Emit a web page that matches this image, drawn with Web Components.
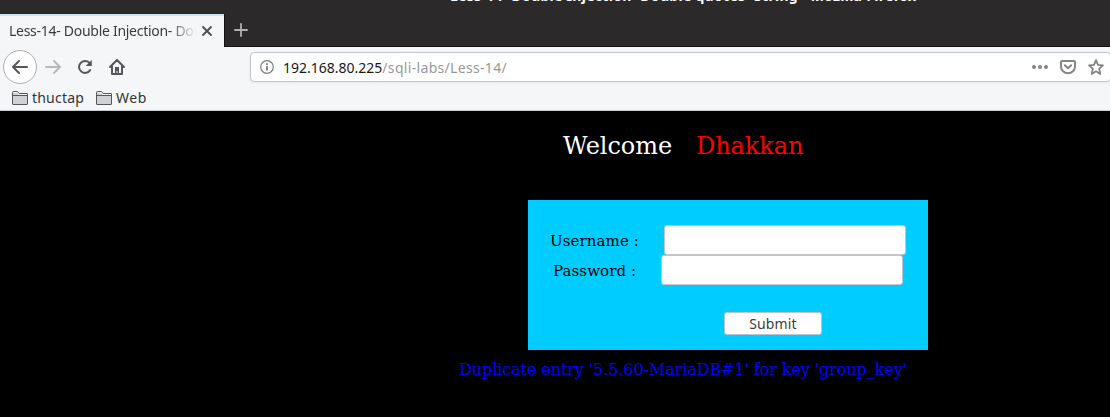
<!DOCTYPE html>
<html lang="en">
<head>
<meta charset="utf-8">
<title>Less-14- Double Injection- Double quotes- String</title>
<style>
html,body{margin:0;width:1110px;height:417px;overflow:hidden;background:#000}
</style>
</head>
<body>
<browser-window>
  <title-bar slot="chrome">Less-14- Double Injection- Double quotes- String - Mozilla Firefox</title-bar>
  <tab-strip slot="chrome">Less-14- Double Injection- Dou</tab-strip>
  <nav-bar slot="chrome"><span slot="host">192.168.80.225</span><span slot="path">/sqli-labs/Less-14/</span></nav-bar>
  <bookmark-bar slot="chrome">
    <bookmark-folder style="--w:52px;--ls:.2px">thuctap</bookmark-folder>
    <bookmark-folder style="--w:31px;--ls:.5px">Web</bookmark-folder>
  </bookmark-bar>
  <lesson-page>
    <login-form>
      <form-field style="--left:22px;--label:114px">Username :</form-field>
      <form-field style="--left:25px;--label:108px">Password :</form-field>
    </login-form>
    <span slot="message">Duplicate entry '5.5.60-MariaDB#1' for key 'group_key'</span>
  </lesson-page>
</browser-window>
<script>
const define = (name, html) => customElements.define(name, class extends HTMLElement {
  constructor() {
    super();
    this.attachShadow({ mode: 'open' }).innerHTML = html;
  }
});

define('browser-window', `
<style>
:host{display:flex;flex-direction:column;width:1110px;height:417px;font-family:"Noto Sans",sans-serif;background:#000}
header{height:110px;flex:none;display:flex;flex-direction:column;background:#f5f6f8;border-bottom:1px solid #c5c9cd}
</style>
<header><slot name="chrome"></slot></header><slot></slot>`);

define('title-bar', `
<style>
:host{display:block;height:14px;background:#2c292a;color:#fff;overflow:hidden}
div{margin:-14px 0 0 450px;height:20px;line-height:20px;font-size:14px;font-weight:700;white-space:nowrap;letter-spacing:.29px}
</style>
<div><slot></slot></div>`);

define('tab-strip', `
<style>
:host{display:flex;height:33px;background:#2c292a}
.tab{width:224px;height:33px;box-sizing:border-box;border-top:2px solid #cbe6fb;background:#f5f6f8;display:flex;align-items:center;padding-left:9px}
.label{width:187px;height:24px;line-height:22px;overflow:hidden;white-space:nowrap;font-size:14px;letter-spacing:-.28px;color:#3b3b3d;
 -webkit-mask-image:linear-gradient(90deg,#000 160px,transparent 187px);mask-image:linear-gradient(90deg,#000 160px,transparent 187px)}
.close{margin:-2px 0 0 5px}
.rest{flex:1;box-sizing:border-box;border-top:1px solid #2c292a;border-bottom:1px solid #141213;border-left:1px solid #141213;display:flex;padding:7px 0 0 8px}
svg{flex:none}
</style>
<div class="tab"><div class="label"><slot></slot></div>
<svg class="close" width="12" height="12" viewBox="0 0 12 12"><path d="M2 2l8 8M10 2l-8 8" stroke="#4b4c50" stroke-width="1.8" stroke-linecap="round"/></svg></div>
<div class="rest"><svg width="16" height="16" viewBox="0 0 16 16"><path d="M8 2v12M2 8h12" stroke="#b0afb0" stroke-width="1.8" stroke-linecap="round"/></svg></div>`);

define('nav-bar', `
<style>
:host{display:flex;height:40px;align-items:center;box-sizing:border-box}
svg{flex:none;display:block}
.back{width:32px;height:32px;flex:none;margin-left:3px;border:1px solid #b1b1b3;border-radius:50%;background:#fdfdfd;display:grid;place-items:center}
.url{display:flex;align-items:center;box-sizing:border-box;width:861px;height:30px;flex:none;margin-left:124px;border:1px solid #c1c5cd;border-radius:4px;background:#fff;box-shadow:0 1px 3px #0000000f;padding-left:9px}
.text{width:747px;flex:none;margin-left:9px;font-size:14px;line-height:20px;padding-top:1px;white-space:nowrap;color:#18181a}
.host{letter-spacing:0}
.path{color:#98989b;letter-spacing:.32px}
</style>
<div class="back"><svg width="18" height="16" viewBox="0 0 18 16"><path d="M16 8H2.500M8 2L2 8l6 6" fill="none" stroke="#555659" stroke-width="2" stroke-linecap="round" stroke-linejoin="round"/></svg></div>
<svg style="margin-left:7px" width="18" height="16" viewBox="0 0 18 16"><path d="M2 8h13.500M10 2l6 6-6 6" fill="none" stroke="#b9babc" stroke-width="2" stroke-linecap="round" stroke-linejoin="round"/></svg>
<svg style="margin-left:14px" width="18" height="16" viewBox="0 0 18 16"><path d="M13.300 3.700A6 6 0 1 0 14.200 11" fill="none" stroke="#555659" stroke-width="2" stroke-linecap="round"/><path d="M15.800 .9v6.200H9.600z" fill="#555659"/></svg>
<svg style="margin-left:14px" width="18" height="18" viewBox="0 0 18 18"><path d="M2 9l7-7 7 7M4 8.500V16h10V8.500" fill="none" stroke="#555659" stroke-width="2" stroke-linecap="round" stroke-linejoin="round"/><path d="M7 9h4v6H9.500v-2H8.500v2H7z" fill="#555659"/></svg>
<div class="url">
<svg width="14" height="14" viewBox="0 0 14 14"><circle cx="7" cy="7" r="6.300" fill="none" stroke="#7d7d80" stroke-width="1.200"/><path d="M6.100 6h1.800v4.500H6.100zM6.100 3.200h1.800V5H6.100z" fill="#7d7d80"/></svg>
<div class="text"><span class="host"><slot name="host"></slot></span><span class="path"><slot name="path"></slot></span></div>
<svg style="margin-left:1px" width="18" height="6" viewBox="0 0 18 6"><g fill="#858587"><circle cx="3" cy="3" r="2"/><circle cx="9" cy="3" r="2"/><circle cx="15" cy="3" r="2"/></g></svg>
<svg style="margin-left:11px" width="16" height="16" viewBox="0 0 16 16"><path d="M2 2h12a1 1 0 0 1 1 1v4.500a7 6.800 0 0 1-14 0V3a1 1 0 0 1 1-1z" fill="none" stroke="#858587" stroke-width="2"/><path d="M4.800 6.300L8 9.300l3.200-3" fill="none" stroke="#858587" stroke-width="2" stroke-linecap="round" stroke-linejoin="round"/></svg>
<svg style="margin-left:12px" width="16" height="16" viewBox="0 0 16 16"><path d="M8 1.200l2 4.700 5 .500-3.800 3.300L12.300 15 8 12.200 3.700 15l1.100-5.300L1 6.400l5-.5z" fill="none" stroke="#858587" stroke-width="1.800" stroke-linejoin="round"/></svg>
</div>`);

define('bookmark-bar', `
<style>:host{display:flex;height:23px;padding-left:12px;gap:12px;align-items:center}</style><slot></slot>`);

define('bookmark-folder', `
<style>
:host{display:flex;align-items:center;gap:4px;height:22px;color:#333437}
svg{flex:none;margin-top:-1px}
span{width:var(--w);font-size:14px;line-height:20px;height:22px;letter-spacing:var(--ls);white-space:nowrap}
</style>
<svg width="16" height="14" viewBox="0 0 16 14"><path d="M.5 13V1.500q0-1 1-1h4l1.500 2h8q.5 0 .5.500v10q0 .5-.5.500H1q-.5 0-.5-.500z" fill="#d0d1d2" stroke="#55565a"/><path d="M1 4.500h14" stroke="#55565a"/><path d="M1.500 1.500h3.700l1.500 2H15" fill="none" stroke="#f5f6f8" stroke-width="1"/></svg>
<span><slot></slot></span>`);

define('lesson-page', `
<style>
:host{display:flex;flex-direction:column;flex:1;background:#000;font-family:"DejaVu Serif",serif}
.welcome{display:flex;height:28px;line-height:28px;margin:21px 0 0 563px;font-size:24px;white-space:pre;color:#fff}
.welcome span{width:133px;letter-spacing:-.05px}
.welcome i{font-style:normal;color:#f00;letter-spacing:-.05px}
.message{margin:10px 0 0 459px;font-size:16px;line-height:20px;white-space:nowrap;color:#00f;letter-spacing:-.08px}
</style>
<div class="welcome"><span>Welcome</span><i>Dhakkan</i></div>
<slot></slot>
<div class="message"><slot name="message"></slot></div>`);

define('login-form', `
<style>
:host{display:flex;flex-direction:column;box-sizing:border-box;width:400px;height:150px;margin:40px 0 0 528px;padding-top:25px;background:#0cf}
button{margin:27px 0 0 196px;width:98px;height:23px;box-sizing:border-box;padding:0;border:1px solid #bfc3ca;border-radius:3px;background:#fff;color:#3b3b3d;font:14px/20px "Noto Sans",sans-serif;letter-spacing:.15px}
</style>
<slot></slot><button type="button">Submit</button>`);

define('form-field', `
<style>
:host{display:flex;height:30px;padding-left:var(--left);align-items:center;color:#000}
label{width:var(--label);font-size:15px;line-height:20px;padding-top:2px;white-space:nowrap;letter-spacing:.1px}
input{box-sizing:border-box;width:242px;height:30px;margin:0;border:1px solid #c3c6cc;border-radius:3px;background:#fff;outline:0}
</style>
<label><slot></slot></label><input type="text">`);
</script>
</body>
</html>
